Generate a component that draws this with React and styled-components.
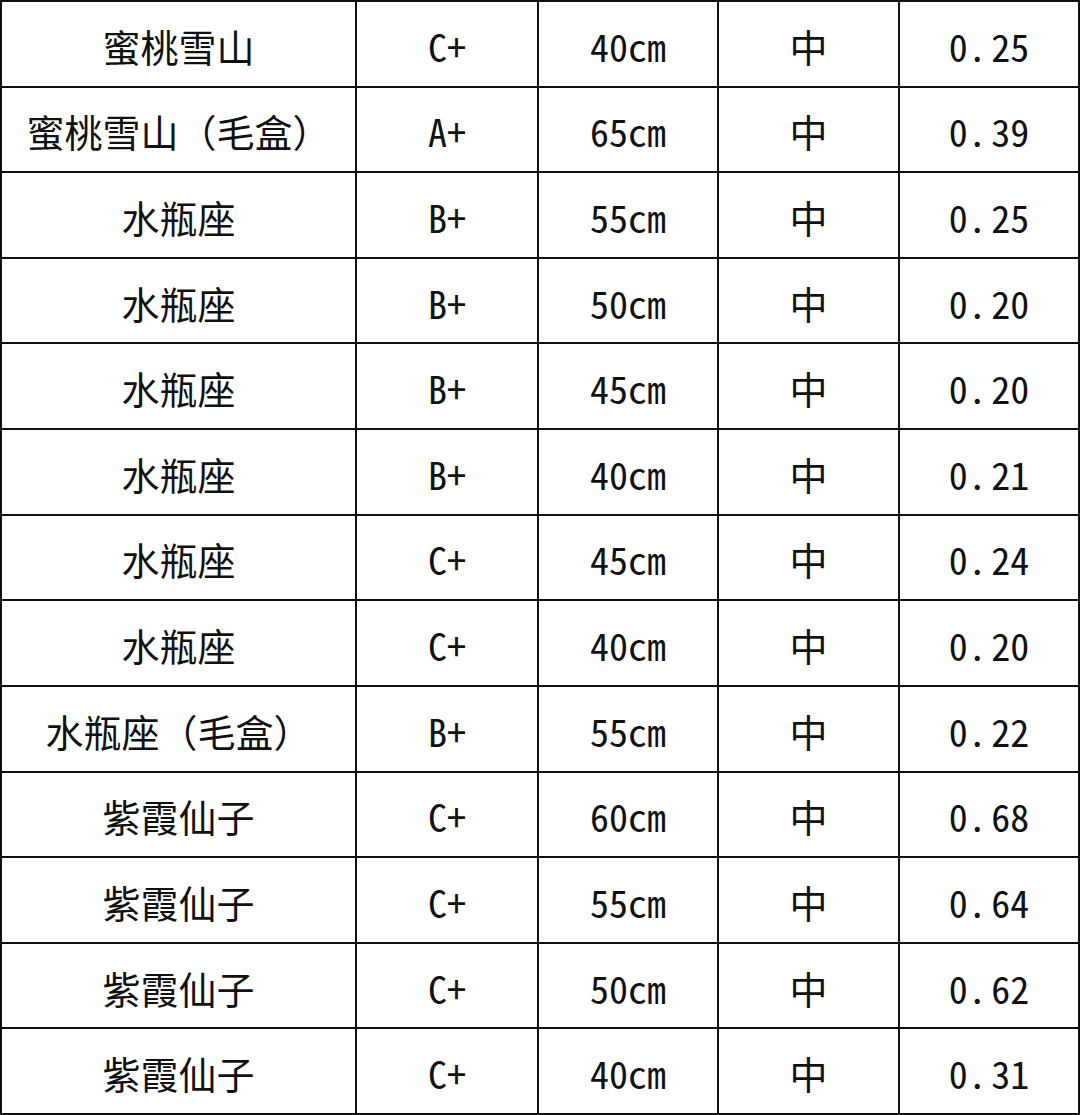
import styled, { createGlobalStyle } from "styled-components";

const GlobalStyle = createGlobalStyle`
  html, body {
    margin: 0;
    padding: 0;
    background: #ffffff;
  }
`;

const Table = styled.div`
  width: 1080px;
  height: 1115px;
  box-sizing: border-box;
  display: grid;
  grid-template-columns: 353px 180px 178px 179px 178px;
  grid-template-rows: repeat(13, 1fr);
  gap: 2px;
  padding: 2px;
  background: #111111;
`;

const Cell = styled.div`
  background: #ffffff;
  display: flex;
  align-items: center;
  justify-content: center;
  color: #111111;
  font-family: "Noto Sans Mono CJK SC", "Noto Sans CJK SC", "DejaVu Sans Mono", monospace;
  font-size: 38px;
  white-space: pre;
  padding-top: 3px;
`;

// SimHei puts the full stop at the left of its cell, which reads as "0. 25"
const Dot = styled.span`
  letter-spacing: 0.12em;
`;

const rows = [
  ["蜜桃雪山", "C+", "40cm", "中", "0.25"],
  ["蜜桃雪山（毛盒）", "A+", "65cm", "中", "0.39"],
  ["水瓶座", "B+", "55cm", "中", "0.25"],
  ["水瓶座", "B+", "50cm", "中", "0.20"],
  ["水瓶座", "B+", "45cm", "中", "0.20"],
  ["水瓶座", "B+", "40cm", "中", "0.21"],
  ["水瓶座", "C+", "45cm", "中", "0.24"],
  ["水瓶座", "C+", "40cm", "中", "0.20"],
  ["水瓶座（毛盒）", "B+", "55cm", "中", "0.22"],
  ["紫霞仙子", "C+", "60cm", "中", "0.68"],
  ["紫霞仙子", "C+", "55cm", "中", "0.64"],
  ["紫霞仙子", "C+", "50cm", "中", "0.62"],
  ["紫霞仙子", "C+", "40cm", "中", "0.31"],
];

function Price({ value }) {
  const [whole, frac] = value.split(".");
  return (
    <span>
      {whole}
      <Dot>.</Dot>
      {frac}
    </span>
  );
}

export default function App() {
  return (
    <>
      <GlobalStyle />
      <Table>
        {rows.map((row, i) =>
          row.map((value, j) => (
            <Cell key={`${i}-${j}`}>
              {j === 4 ? <Price value={value} /> : value}
            </Cell>
          ))
        )}
      </Table>
    </>
  );
}
